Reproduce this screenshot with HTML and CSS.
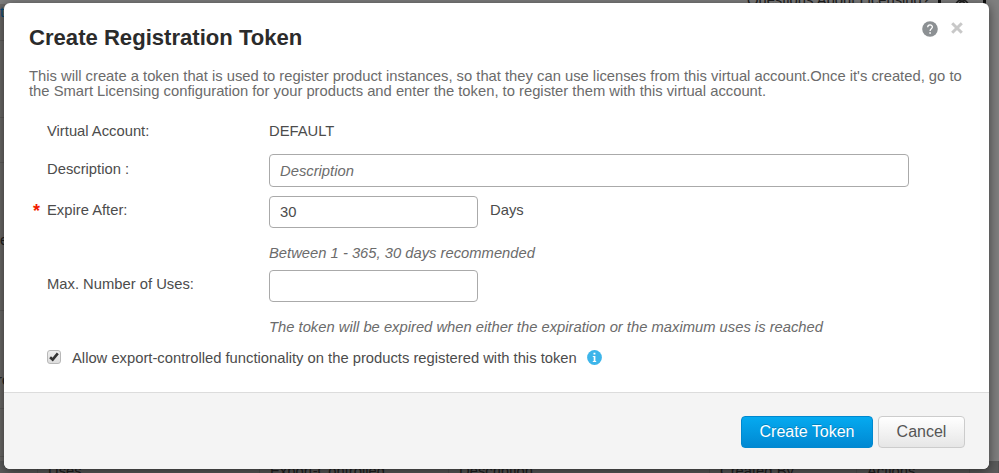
FILE: index.html
```html
<!DOCTYPE html>
<html lang="en">
<head>
<meta charset="utf-8">
<title>Create Registration Token</title>
<link rel="stylesheet" href="styles.css">
</head>
<body>
<div class="page">
  <div class="page-top">
    <span class="page-question">Questions About Licensing?</span>
    <span class="page-bar"></span>
    <svg class="page-eye" width="18" height="12" viewBox="0 0 18 12"><path d="M3 6a6 5 0 0 1 12 0" fill="none" stroke="#202020" stroke-width="1.6"/><circle cx="9" cy="5" r="2.6" fill="none" stroke="#202020" stroke-width="1.5"/></svg>
    <span class="page-bar"></span>
  </div>
  <div class="page-side">
    <div class="side-cell side-a"><span class="side-link">t</span></div>
    <div class="side-cell side-b"></div>
    <div class="side-cell side-c"></div>
    <div class="side-cell side-d">e</div>
    <div class="side-cell side-e">rc</div>
    <div class="side-cell side-f"></div>
  </div>
  <div class="page-head">
    <span></span><span>Uses</span><span>Export-Controlled</span><span>Description</span><span>Created By</span><span>Actions</span><span></span>
  </div>
</div>
<section class="modal">
  <header class="modal-header">
    <h1 class="title">Create Registration Token</h1>
    <div class="tools">
      <svg width="16" height="16" viewBox="0 0 16 16"><circle cx="8" cy="8" r="7.8" fill="#8c9093"/><path d="M5.7 6.2C5.7 3.2 10.4 3.2 10.4 6.1C10.4 7.8 8.1 7.8 8.1 10" fill="none" stroke="#fff" stroke-width="1.3"/><path d="M7.3 11.2h1.6v1.6h-1.6z" fill="#fff"/></svg>
      <svg class="close" width="12" height="12" viewBox="0 0 12 12"><path d="M1.2 1.2l9.6 9.6M10.8 1.2l-9.6 9.6" stroke="#c8c8c8" stroke-width="3"/></svg>
    </div>
  </header>
  <div class="modal-body">
    <p class="intro">This will create a token that is used to register product instances, so that they can use licenses from this virtual account.Once it's created, go to<br>the Smart Licensing configuration for your products and enter the token, to register them with this virtual account.</p>
    <form class="form">
      <div class="row row-account"><span class="label">Virtual Account:</span><span>DEFAULT</span></div>
      <div class="row row-description"><label class="label" for="description">Description :</label><input class="input wide" id="description" type="text" placeholder="Description"></div>
      <div class="row row-expire"><label class="label" for="expire"><span class="required">*</span>Expire After:</label><input class="input" id="expire" type="text" value="30"><span class="unit">Days</span></div>
      <p class="hint">Between 1 - 365, 30 days recommended</p>
      <div class="row row-uses"><label class="label" for="uses">Max. Number of Uses:</label><input class="input" id="uses" type="text"></div>
      <p class="hint">The token will be expired when either the expiration or the maximum uses is reached</p>
      <div class="allow">
        <span class="checkbox"><svg width="12" height="12" viewBox="0 0 12 12"><path d="M2.1 6.2l2.6 2.4L9.8 2.4" fill="none" stroke="#333" stroke-width="2.6"/></svg></span>
        <span class="allow-text">Allow export-controlled functionality on the products registered with this token</span>
        <svg width="15" height="15" viewBox="0 0 15 15"><circle cx="7.5" cy="7.5" r="7.4" fill="#3db5ea"/><path d="M6.5 2.8h1.9v1.8h-1.9zM5.8 5.9h2.6v5h.8v1h-3.4v-1h.9v-4h-.9z" fill="#fff"/></svg>
      </div>
    </form>
  </div>
  <footer class="modal-footer">
    <button class="button primary">Create Token</button>
    <button class="button">Cancel</button>
  </footer>
</section>
</body>
</html>
```
FILE: styles.css
```css
* { box-sizing: border-box; }
body {
  margin: 0;
  width: 999px;
  height: 473px;
  overflow: hidden;
  background: #808080;
  font-family: "Liberation Sans", Arial, sans-serif;
  font-size: 14.78px;
  color: #4c4c4c;
}
.page {
  display: flex;
  flex-direction: column;
  height: 473px;
  color: #202020;
}
.page-top {
  display: flex;
  justify-content: flex-end;
  height: 12px;
  margin-top: -8px;
  padding-right: 13px;
  line-height: 16px;
}
.page-bar { width: 3px; background: #101010; }
.page-question { margin-right: 8px; }
.page-eye { margin: 7px 12px 0; }
.page-side {
  width: 8px;
  flex: 1;
  background: #6d6b69;
  overflow: hidden;
}
.side-cell { border-bottom: 1px solid #605e5c; white-space: nowrap; line-height: 17px; }
.side-a { height: 37px; }
.side-link { color: #0b4a78; }
.side-b { height: 77px; }
.side-c { height: 45px; }
.side-d { height: 148px; padding-top: 69px; }
.side-e { height: 98px; padding-top: 61px; text-indent: -3px; }
.side-f { height: 48px; }
.page-head {
  display: grid;
  grid-template-columns: 38px 222px 189px 261px 147px 113px 1fr;
  height: 12px;
  overflow: hidden;
  line-height: 21px;
  background: #5c5c5c;
}
.page-head span { padding-left: 10px; border-right: 1px solid #525252; }
.modal {
  position: absolute;
  left: 4px;
  top: 3px;
  width: 985px;
  height: 466px;
  display: flex;
  flex-direction: column;
  background: #fff;
  border-radius: 6px;
  overflow: hidden;
  box-shadow: 0 2px 12px rgba(0, 0, 0, .55);
}
.modal-header {
  display: flex;
  justify-content: space-between;
  height: 66px;
  padding: 18px 26px 0 25px;
}
.title { margin: 4px 0 0; font-size: 22.1px; line-height: 25px; color: #2b2b2b; }
.tools { display: flex; gap: 13px; }
.close { margin-top: 1px; }
.modal-body { flex: 1; padding: 0 25px; }
.intro { margin: 0; line-height: 15px; color: #6b6b6b; white-space: nowrap; }
.form { padding-left: 18px; }
.row { display: flex; line-height: 17px; }
.label { position: relative; width: 222px; }
.required { position: absolute; left: -14px; top: 7px; font-size: 18px; font-weight: bold; color: #f21b00; }
.input {
  width: 209px;
  height: 32px;
  padding: 0 10px;
  border: 1px solid #aaa;
  border-radius: 4px;
  font: inherit;
  color: #4c4c4c;
  background: #fff;
}
.wide { width: 640px; }
.input::placeholder { color: #6c6c6c; font-style: italic; opacity: 1; }
.unit { margin: 6px 0 0 12px; }
.row-account { margin-top: 24px; }
.row-description { margin-top: 14px; }
.row-description .label { padding-top: 7px; }
.row-description .input { height: 33px; }
.row-expire { margin-top: 9px; }
.row-expire .label, .row-uses .label { padding-top: 6px; }
.hint { margin: 17px 0 0 222px; line-height: 17px; font-style: italic; color: #6b6b6b; }
.row-uses { margin-top: 8px; }
.allow { display: flex; align-items: center; height: 17px; margin-top: 13px; }
.checkbox {
  display: grid;
  place-items: center;
  width: 14px;
  height: 14px;
  margin-bottom: 2px;
  border: 1px solid #b8b8b8;
  border-radius: 3px;
  background: linear-gradient(#eee, #ddd);
}
.allow-text { margin: 0 10px 0 11px; }
.modal-footer {
  display: flex;
  justify-content: flex-end;
  gap: 5px;
  height: 77px;
  padding: 23px 24px 0 0;
  border-top: 1px solid #dcdcdc;
  background: #f4f4f4;
}
.button {
  width: 87px;
  height: 32px;
  padding: 0;
  border: 1px solid #ccc;
  border-radius: 4px;
  background: linear-gradient(#fff, #e6e6e6);
  font: 16px "Liberation Sans", Arial, sans-serif;
  color: #555;
}
.primary {
  width: 132px;
  border-color: #0088cf;
  background: linear-gradient(#05aaf0, #0088d2);
  color: #fff;
  text-shadow: 0 -1px 0 rgba(0, 0, 0, .2);
}
```
